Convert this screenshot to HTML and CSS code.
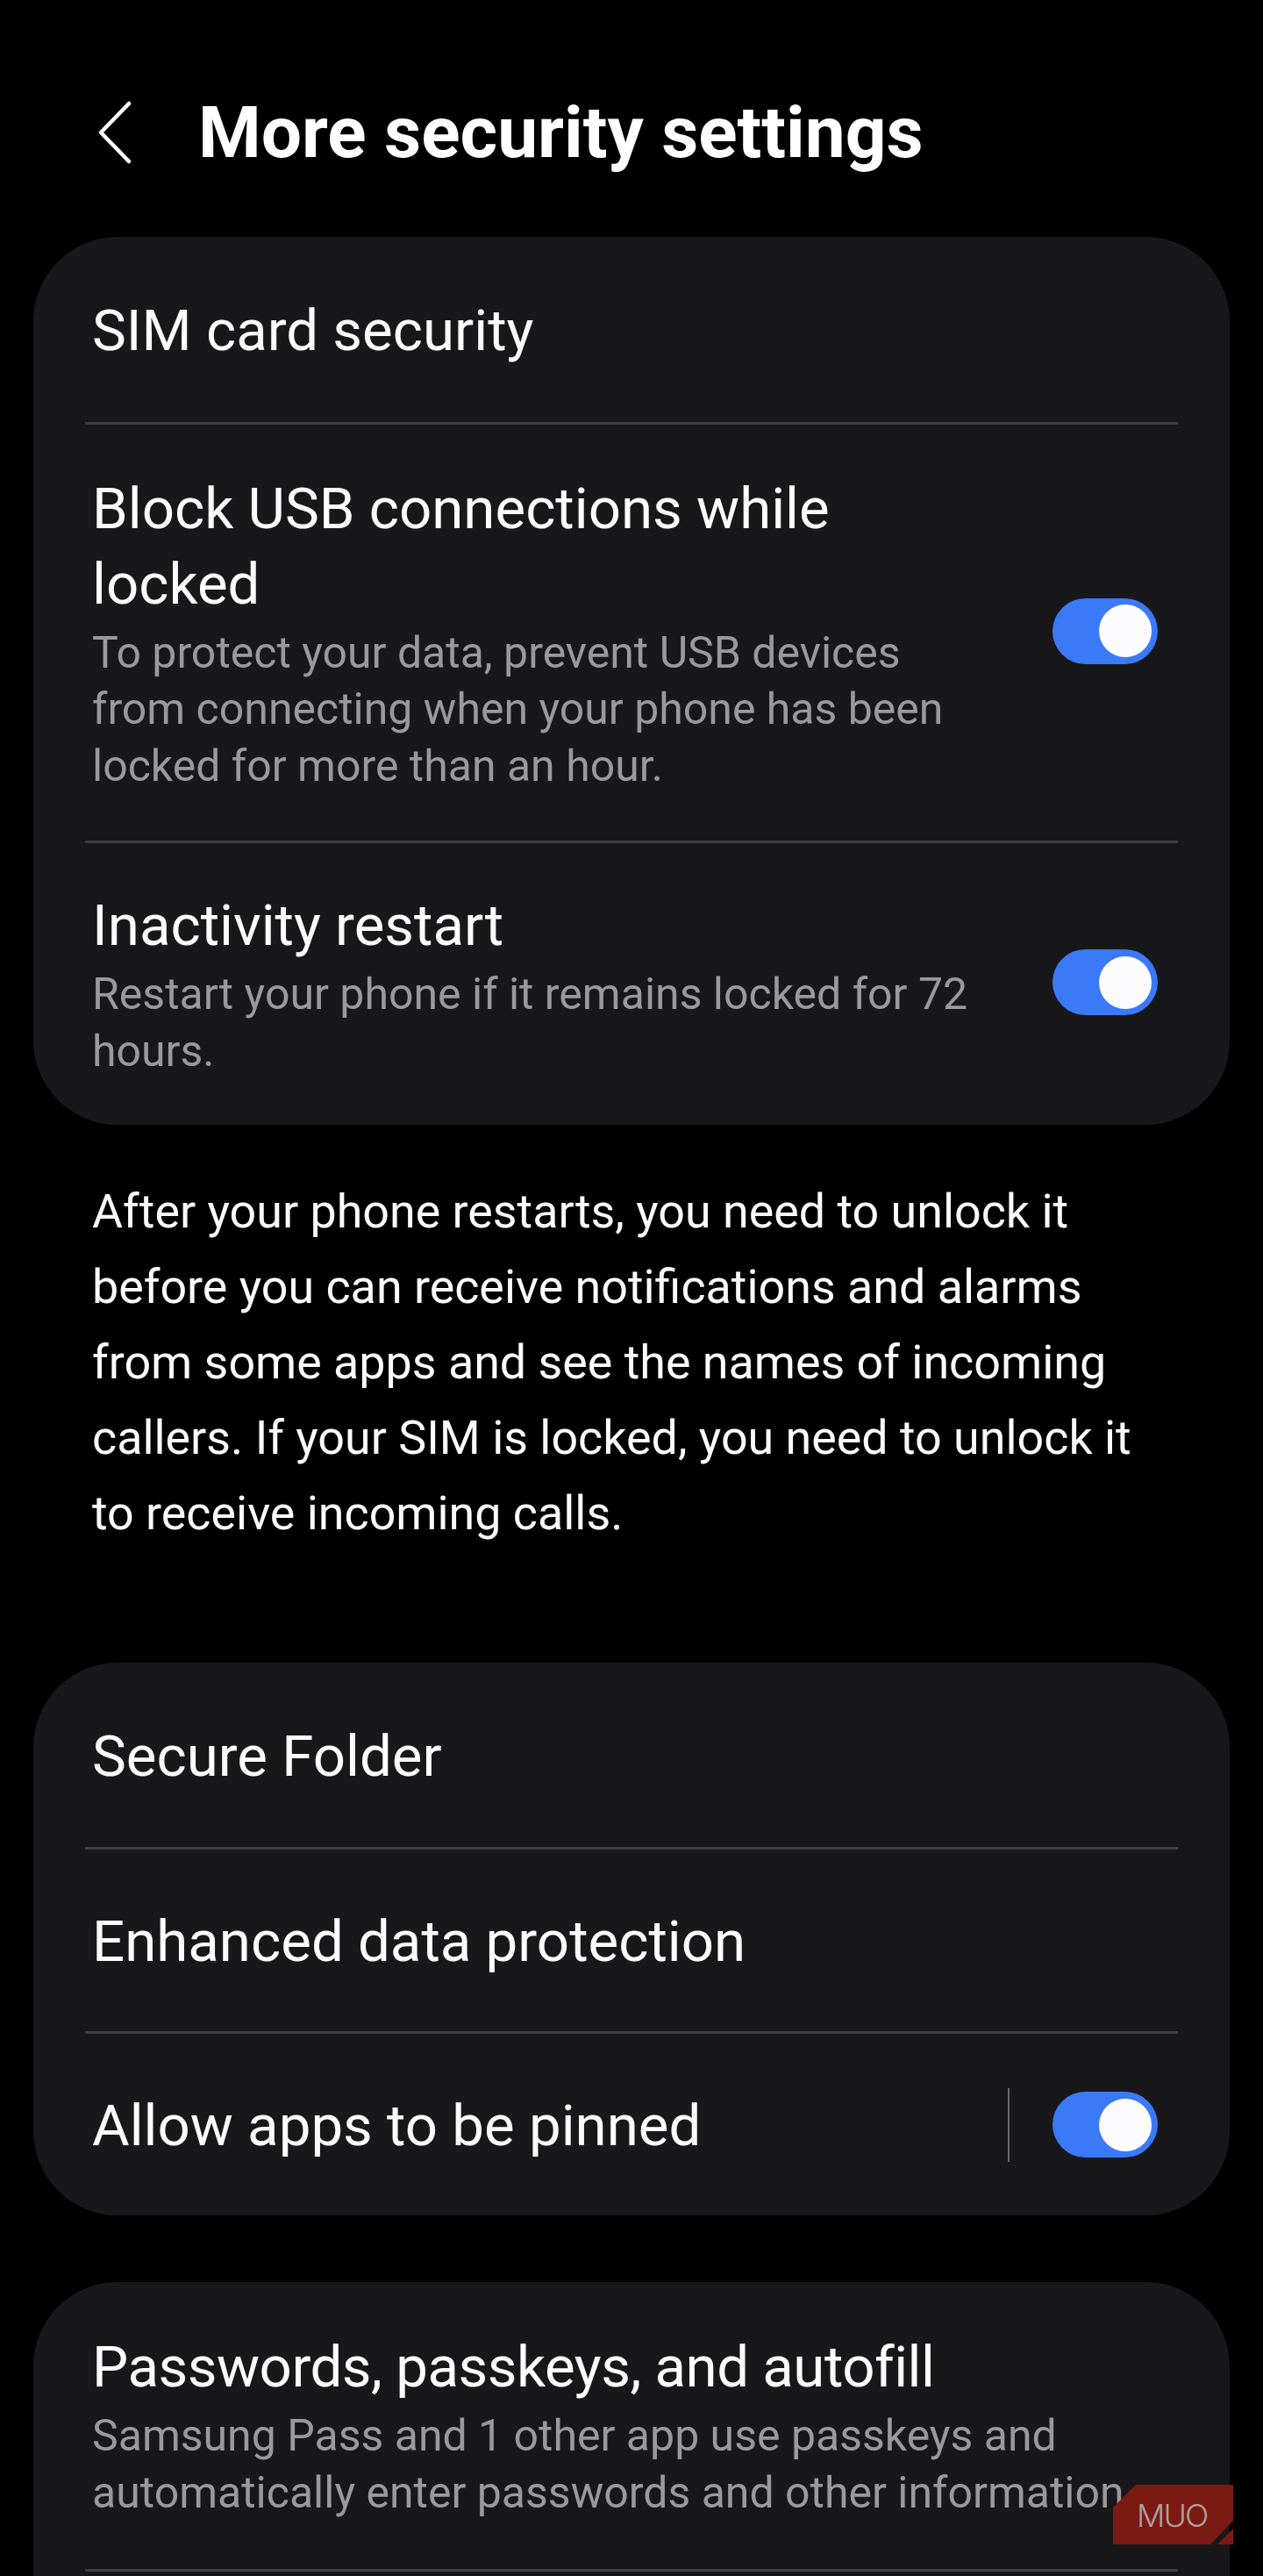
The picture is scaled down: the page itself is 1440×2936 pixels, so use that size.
FILE: index.html
```html
<!DOCTYPE html>
<html lang="en">
<head>
  <meta charset="UTF-8" />
  <title>More security settings</title>
  <link rel="stylesheet" href="styles.css">
</head>
<body>
  <header class="topbar">
    <svg class="back" width="40" height="72" viewBox="0 0 40 72">
      <path d="M36 3 L4 36 L36 69" />
    </svg>
    <h1>More security settings</h1>
  </header>

  <section class="card first">
    <div class="row row-single"><span class="name">SIM card security</span></div>
    <div class="row row-block">
      <div class="text">
        <div class="name">Block USB connections while locked</div>
        <div class="desc">To protect your data, prevent USB devices from connecting when your phone has been locked for more than an hour.</div>
      </div>
      <span class="switch"></span>
    </div>
    <div class="row row-restart">
      <div class="text">
        <div class="name">Inactivity restart</div>
        <div class="desc">Restart your phone if it remains locked for 72 hours.</div>
      </div>
      <span class="switch"></span>
    </div>
  </section>

  <p class="note">After your phone restarts, you need to unlock it before you can receive notifications and alarms from some apps and see the names of incoming callers. If your SIM is locked, you need to unlock it to receive incoming calls.</p>

  <section class="card second">
    <div class="row row-single"><span class="name">Secure Folder</span></div>
    <div class="row row-single"><span class="name">Enhanced data protection</span></div>
    <div class="row row-single">
      <span class="name">Allow apps to be pinned</span>
      <span class="sep"></span>
      <span class="switch"></span>
    </div>
  </section>

  <section class="card third">
    <div class="row row-pass">
      <div class="text wide">
        <div class="name">Passwords, passkeys, and autofill</div>
        <div class="desc">Samsung Pass and 1 other app use passkeys and automatically enter passwords and other information.</div>
      </div>
    </div>
    <div class="row"></div>
  </section>

  <div class="badge">
    <svg class="badge-bg" width="137" height="68" viewBox="0 0 137 68">
      <path d="M0 68 V26 L26 0 H137 V41 L111 68 Z" />
      <path d="M137 50 V68 H119 Z" />
    </svg>
    <span class="badge-text">MUO</span>
  </div>
</body>
</html>
```

FILE: styles.css
```css
* {
  box-sizing: border-box;
  margin: 0;
  padding: 0;
}
html, body {
  height: 2936px;
  overflow: hidden;
}
body {
  position: relative;
  background: #000;
  color: #fbfbfd;
  font-family: Roboto, sans-serif;
}
.topbar {
  display: flex;
  align-items: center;
  height: 270px;
  padding: 32px 0 0 111px;
}
.back {
  flex: none;
  margin-right: 75px;
}
.back path {
  fill: none;
  stroke: #fff;
  stroke-width: 4.5;
  stroke-linecap: round;
  stroke-linejoin: round;
}
h1 {
  font-size: 82px;
  font-weight: 700;
  line-height: 90px;
  color: #fff;
}
.card {
  margin: 0 38px 0 38px;
  padding: 0 59px;
  background: #18181a;
  border-radius: 96px;
}
.row {
  display: flex;
  align-items: center;
  border-top: 3px solid #3f3f41;
}
.row:first-child {
  border-top: 0;
}
.row-single {
  height: 211px;
}
.second .row-single {
  height: 210px;
}
.row-block {
  height: 477px;
}
.row-block .switch {
  margin-bottom: 4px;
}
.row-restart {
  height: 324px;
  padding-bottom: 4px;
}
.row-restart .text {
  padding-top: 4px;
}
.row-pass {
  height: 327px;
}
.text {
  width: 1010px;
}
.text.wide {
  width: 1240px;
}
.name {
  font-size: 65.4px;
  line-height: 86px;
  margin-left: 8px;
}
.row-single .name {
  padding-top: 2px;
}
.second .row-single .name {
  padding-top: 3px;
}
.third .name {
  letter-spacing: -0.5px;
}
.desc {
  font-size: 50px;
  line-height: 64.6px;
  color: #99999e;
  margin: 3px 0 0 8px;
}
.switch {
  position: relative;
  flex: none;
  width: 120px;
  height: 75px;
  margin-left: auto;
  margin-right: 23px;
  border-radius: 38px;
  background: #3a7af8;
}
.switch::after {
  content: "";
  position: absolute;
  top: 7.5px;
  right: 7px;
  width: 60px;
  height: 60px;
  border-radius: 50%;
  background: #fcfcff;
}
.sep {
  flex: none;
  width: 2px;
  height: 84px;
  margin-left: auto;
  background: #6b6b6d;
}
.sep + .switch {
  margin-left: 49px;
}
.note {
  padding: 56px 90px 0 105px;
  height: 613px;
  font-size: 53.8px;
  line-height: 86px;
}
.second {
  margin-bottom: 76px;
}
.third {
  height: 700px;
}
.badge {
  position: absolute;
  left: 1269px;
  top: 2832px;
  width: 137px;
  height: 68px;
}
.badge-bg {
  display: block;
}
.badge-bg path {
  fill: #7a1a12;
}
.badge-text {
  position: absolute;
  left: 27px;
  top: 17px;
  font-family: Inter, sans-serif;
  font-weight: 300;
  font-size: 36px;
  line-height: 36px;
  letter-spacing: -2px;
  color: #ada19f;
}
```
